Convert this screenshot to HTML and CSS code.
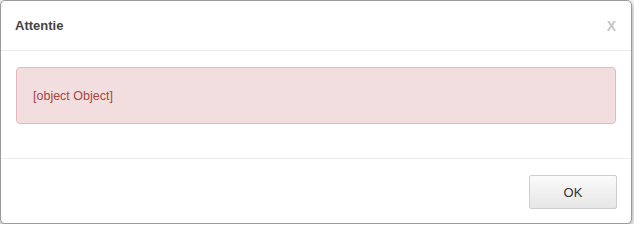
FILE: index.html
```html
<!DOCTYPE html>
<html>
<head>
<meta charset="utf-8">
<title>Attentie</title>
<link rel="stylesheet" href="styles.css">
</head>
<body>
<div class="modal">
  <div class="modal-header">
    <h4 class="modal-title">Attentie</h4>
    <button class="close" type="button">X</button>
  </div>
  <div class="modal-body">
    <div class="alert">[object Object]</div>
  </div>
  <div class="modal-footer">
    <button class="btn" type="button">OK</button>
  </div>
</div>
</body>
</html>
```

FILE: styles.css
```css
html, body {
  margin: 0;
  padding: 0;
  background: #ffffff;
}
body {
  font-family: "Liberation Sans", Arial, sans-serif;
  color: #333333;
}
.modal {
  box-sizing: border-box;
  width: 632px;
  height: 224px;
  background: #ffffff;
  border: 1px solid #9a9a9a;
  border-radius: 5px;
  box-shadow: 0 2px 6px rgba(0, 0, 0, 0.45);
  display: flex;
  flex-direction: column;
}
.modal-header {
  box-sizing: border-box;
  height: 50px;
  border-bottom: 1px solid #ececec;
  display: flex;
  align-items: center;
  justify-content: space-between;
  padding: 0 15px 0 14px;
}
.modal-title {
  margin: 0;
  font-size: 13px;
  font-weight: bold;
  color: #444444;
}
.close {
  border: 0;
  background: transparent;
  padding: 0;
  margin: 0;
  font-family: "Liberation Sans", Arial, sans-serif;
  font-size: 14px;
  font-weight: bold;
  color: #c6c6c6;
  line-height: 1;
}
.modal-body {
  box-sizing: border-box;
  height: 107px;
  padding: 16px 15px 34px 15px;
}
.alert {
  box-sizing: border-box;
  height: 57px;
  background: #f2dede;
  border: 1px solid #e6b9bf;
  border-radius: 4px;
  color: #a94442;
  font-size: 12.5px;
  display: flex;
  align-items: center;
  padding: 0 16px;
}
.modal-footer {
  box-sizing: border-box;
  flex: 1;
  border-top: 1px solid #ececec;
  display: flex;
  justify-content: flex-end;
  align-items: flex-start;
  padding: 16px 14px 0 0;
}
.btn {
  box-sizing: border-box;
  width: 88px;
  height: 34px;
  border: 1px solid #cfcfcf;
  border-radius: 2px;
  background: linear-gradient(#fbfbfb, #e6e6e6);
  font-family: "Liberation Sans", Arial, sans-serif;
  font-size: 13px;
  color: #333333;
  padding: 0;
}
```
